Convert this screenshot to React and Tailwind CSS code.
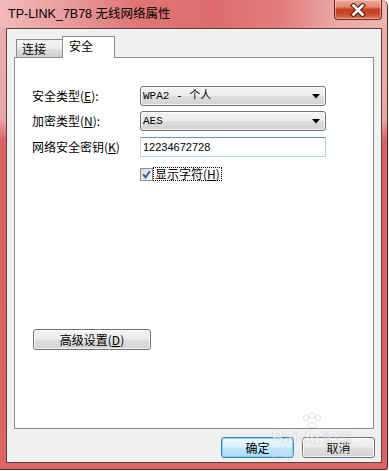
import React from "react";

const cjk = { fontFamily: '"Noto Sans CJK SC", "Liberation Sans", sans-serif' };

function U({ children }) {
  return <span className="underline underline-offset-[1px]">{children}</span>;
}

function Arrow() {
  return (
    <svg width="8" height="5" viewBox="0 0 8 5" className="block">
      <path d="M0 0 H8 L4 4.5 Z" fill="#000" />
    </svg>
  );
}

function Combo({ children }) {
  return (
    <div className="w-[186px] h-[20px] rounded-[3px] border border-[#707070] bg-[linear-gradient(180deg,#f4f4f4_0%,#ececec_48%,#dedede_52%,#d2d2d2_100%)] shadow-[inset_0_0_0_1px_rgba(255,255,255,0.8)] flex items-center justify-between pl-[2px] pr-[5px]">
      <span className="text-[11px] leading-[14px] text-black" style={{ fontFamily: '"Liberation Mono", "Noto Sans CJK SC", monospace' }}>
        {children}
      </span>
      <Arrow />
    </div>
  );
}

export default function App() {
  return (
    <div className="w-[389px] h-[471px] bg-white overflow-hidden relative" style={cjk}>
      {/* window */}
      <div className="w-[388px] h-[470px] flex flex-col border-r border-b border-[#4a2e2e] rounded-tr-[6px] rounded-br-[3px] bg-[linear-gradient(180deg,#eeb0b0_0px,#eaa6a6_120px,#dd6262_140px,#de6464_100%)]">
        {/* title bar */}
        <div className="h-[28px] flex justify-between rounded-tr-[6px] bg-[linear-gradient(90deg,#f1baba_0%,#eba0a0_15%,#e07676_35%,#de6c6c_55%,#e27c7c_72%,#ecaaaa_88%,#efb3b3_100%)]">
          <div className="self-center pl-[8px] text-[12.5px] leading-[14px] text-black" style={{ fontFamily: '"Liberation Sans", "Noto Sans CJK SC", sans-serif' }}>
            TP-LINK_7B78 无线网络属性
          </div>
          <div className="mr-[5px] w-[48px] h-[20px] rounded-b-[4px] border border-t-0 border-[#6a2a22] bg-[linear-gradient(180deg,#eca898_0%,#e48a72_35%,#c8401f_50%,#c94826_70%,#de7258_100%)] shadow-[inset_0_0_0_1px_rgba(255,220,210,0.5)] flex items-center justify-center">
            <svg width="16" height="14" viewBox="0 0 16 14">
              <path d="M3.5 2.5 L12.5 11.5 M12.5 2.5 L3.5 11.5" stroke="#5a2a20" strokeWidth="5" strokeLinecap="square" />
              <path d="M3.5 2.5 L12.5 11.5 M12.5 2.5 L3.5 11.5" stroke="#ffffff" strokeWidth="2.6" strokeLinecap="square" />
            </svg>
          </div>
        </div>

        {/* client */}
        <div className="ml-[6px] w-[376px] h-[435px] border border-[#5a4242] bg-[#f0f0f0] flex flex-col px-[6px] pt-[7px]">
          {/* tabs */}
          <div className="h-[21px] flex items-end pl-[2px] ml-[1px]">
            <div className="w-[46px] h-[18px] border-l border-t border-[#898c95] bg-[linear-gradient(180deg,#f5f5f5_0%,#ebebeb_50%,#dddddd_55%,#cfcfcf_100%)] pl-[5px] text-[12px] leading-[18px] text-black">
              连接
            </div>
            <div className="relative z-10 w-[53px] h-[22px] -mb-[1px] border-l border-t border-r border-[#898c95] bg-white pl-[6px] text-[12px] leading-[18px] text-black">
              安全
            </div>
          </div>

          {/* panel */}
          <div className="ml-[1px] w-[360px] h-[372px] border border-[#898c95] bg-white flex flex-col pl-[17px] pt-[28px]">
            <div className="flex items-center h-[20px]">
              <div className="w-[108px] text-[12px] leading-[14px] text-black">
                安全类型(<U>E</U>):
              </div>
              <Combo>WPA2 - 个人</Combo>
            </div>
            <div className="flex items-center h-[20px] mt-[5px]">
              <div className="w-[108px] text-[12px] leading-[14px] text-black">
                加密类型(<U>N</U>):
              </div>
              <Combo>AES</Combo>
            </div>
            <div className="flex items-center h-[20px] mt-[6px]">
              <div className="w-[108px] text-[12px] leading-[14px] text-black">
                网络安全密钥(<U>K</U>)
              </div>
              <div className="w-[186px] h-[20px] border border-[#bcd3ea] border-t-[#5e93c6] bg-white flex items-center pl-[2px] text-[11px] leading-[14px] text-black" style={{ fontFamily: '"Liberation Sans", sans-serif' }}>
                12234672728
              </div>
            </div>
            <div className="flex items-center h-[14px] mt-[10px] pl-[108px]">
              <div className="w-[13px] h-[13px] border border-[#8e8f8f] bg-[linear-gradient(135deg,#d8dce2_0%,#f6f8fa_100%)] flex items-center justify-center">
                <svg width="9" height="9" viewBox="0 0 9 9">
                  <path d="M1.2 4.3 L3.6 7.3 L7.8 1.2" stroke="#3b5aa0" strokeWidth="1.9" fill="none" />
                </svg>
              </div>
              <div className="h-[14px] border border-dotted border-black px-[1px] text-[12px] leading-[12px] text-black">
                显示字符(<U>H</U>)
              </div>
            </div>

            <div className="mt-[148px] ml-[1px] w-[118px] h-[21px] rounded-[3px] border border-[#707070] bg-[linear-gradient(180deg,#f4f4f4_0%,#ececec_48%,#dedede_52%,#d2d2d2_100%)] shadow-[inset_0_0_0_1px_rgba(255,255,255,0.8)] flex items-center justify-center text-[12px] leading-[14px] text-black">
              高级设置(<U>D</U>)
            </div>
          </div>

          {/* bottom buttons */}
          <div className="mt-[8px] flex justify-end gap-[8px]">
            <div className="w-[73px] h-[21px] rounded-[3px] border border-[#3c7fb1] bg-[linear-gradient(180deg,#ecf7fd_0%,#dcf1fc_48%,#c2e7fc_52%,#a9daf6_100%)] shadow-[inset_0_0_0_1px_rgba(120,210,250,0.9)] flex items-center justify-center text-[12px] leading-[14px] text-black">
              确定
            </div>
            <div className="w-[73px] h-[21px] rounded-[3px] border border-[#707070] bg-[linear-gradient(180deg,#f4f4f4_0%,#ececec_48%,#dedede_52%,#d2d2d2_100%)] shadow-[inset_0_0_0_1px_rgba(255,255,255,0.8)] flex items-center justify-center text-[12px] leading-[14px] text-black">
              取消
            </div>
          </div>
        </div>
      </div>

      {/* watermark */}
      <div className="absolute left-[272px] top-[412px] flex flex-col items-center pointer-events-none" style={{ opacity: 0.45 }}>
        <svg width="26" height="17" viewBox="0 0 26 17">
          <g fill="none" stroke="#b8b8b8" strokeWidth="1">
            <ellipse cx="7" cy="6" rx="2.5" ry="3" />
            <ellipse cx="13" cy="3.5" rx="2.5" ry="3" />
            <ellipse cx="19" cy="6" rx="2.5" ry="3" />
            <path d="M8 14 C9 9.5 17 9.5 18 14 C18 16 8 16 8 14 Z" />
          </g>
        </svg>
        <div className="flex items-end gap-[3px] h-[17px]">
          <span className="text-[16px] leading-[16px] font-bold text-white" style={{ fontFamily: '"Liberation Sans", sans-serif', textShadow: "0 0 1px #888, 0 0 1px #888" }}>Bai</span>
          <span className="text-[16px] leading-[16px] font-bold text-white" style={{ fontFamily: '"Liberation Sans", sans-serif', textShadow: "0 0 1px #888, 0 0 1px #888" }}>du</span>
          <span className="text-[15px] leading-[16px] text-white" style={{ textShadow: "0 0 1px #888, 0 0 1px #888" }}>经验</span>
        </div>
        <div className="mt-[2px] text-[10px] leading-[11px] text-white" style={{ fontFamily: '"Liberation Sans", sans-serif', textShadow: "0 0 1px #999" }}>
          jingyan.baidu.com
        </div>
      </div>
    </div>
  );
}
